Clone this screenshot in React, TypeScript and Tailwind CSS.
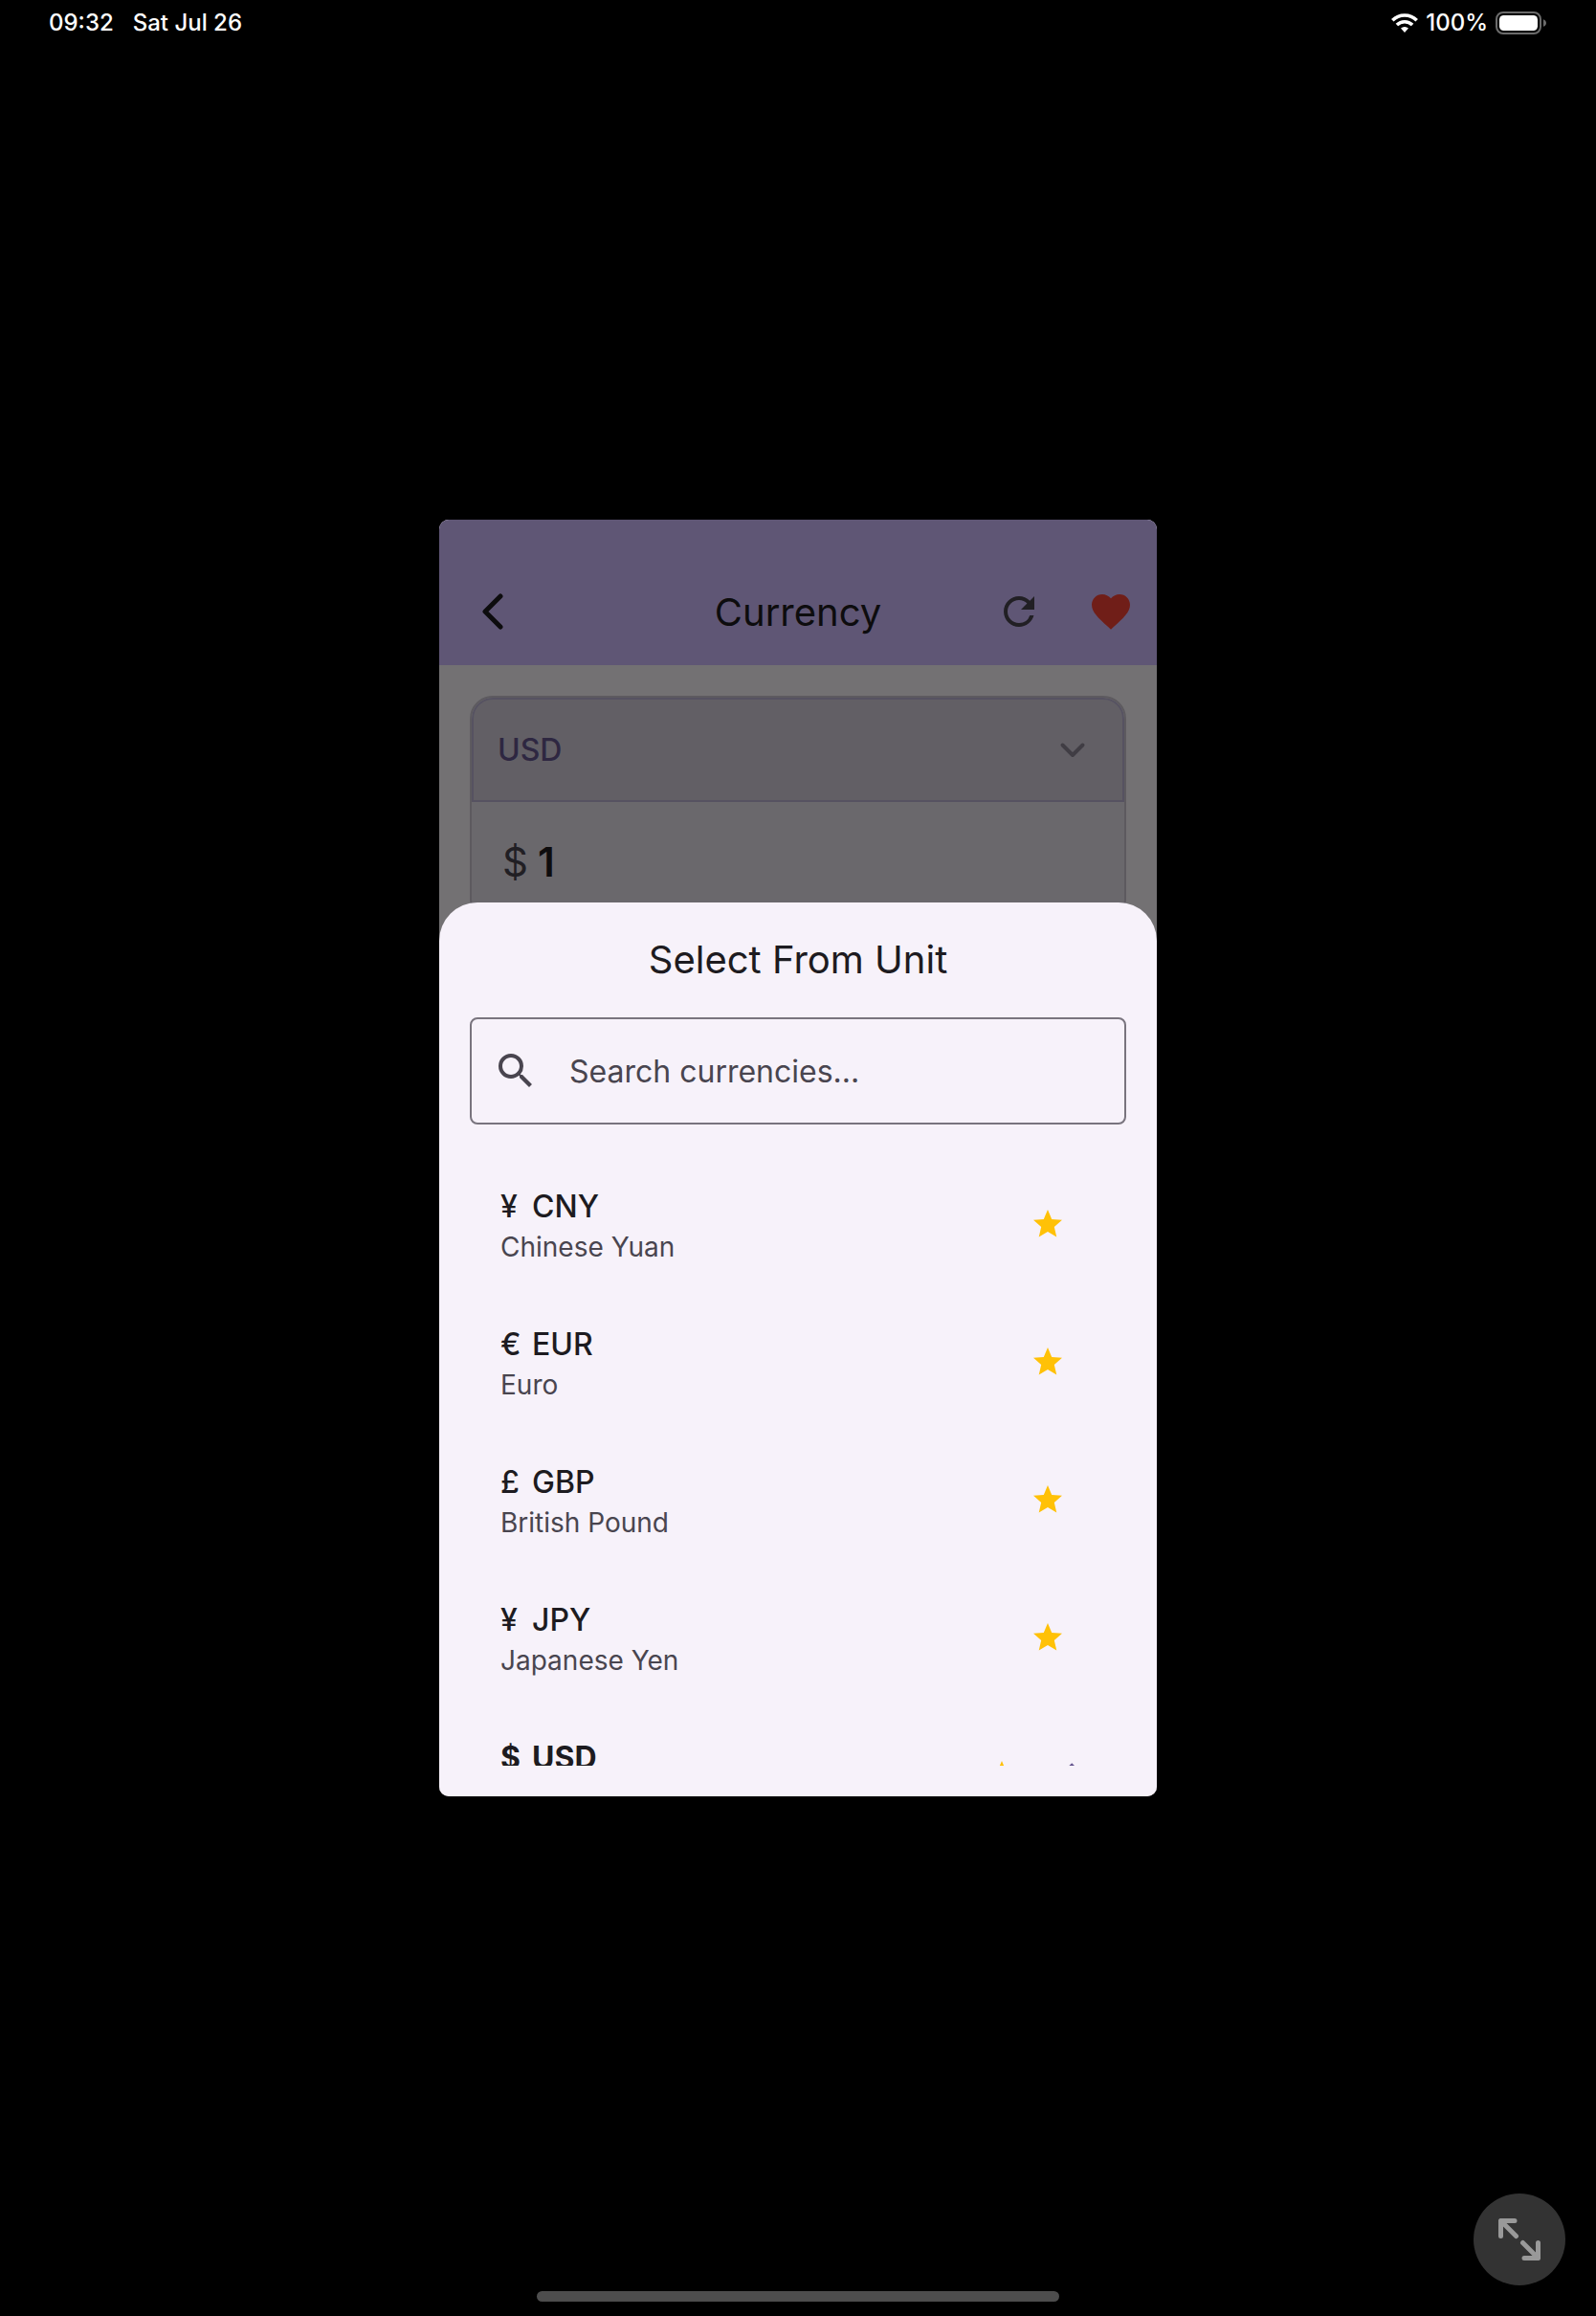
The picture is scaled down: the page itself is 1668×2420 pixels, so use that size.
import React from "react";
import { MdCheck, MdFavorite, MdRefresh, MdSearch, MdStar } from "react-icons/md";

const currencies = [
  { symbol: "¥", code: "CNY", name: "Chinese Yuan" },
  { symbol: "€", code: "EUR", name: "Euro" },
  { symbol: "£", code: "GBP", name: "British Pound" },
  { symbol: "¥", code: "JPY", name: "Japanese Yen" },
  { symbol: "$", code: "USD", name: "US Dollar", selected: true },
];

function StatusBar() {
  return (
    <header className="flex h-12 items-center justify-between px-[51px] text-2xl font-medium text-white">
      <div className="flex gap-5">
        <span>09:32</span>
        <span>Sat Jul 26</span>
      </div>
      <div className="flex items-center gap-2">
        <svg className="h-5 w-7" viewBox="0 0 28 20" fill="none" stroke="white" strokeWidth="3.6" aria-label="Wi-Fi">
          <path d="M1.3 7.2a18 18 0 0 1 25.4 0" />
          <path d="M5.9 12a11.6 11.6 0 0 1 16.2 0" />
          <path d="M14 20l-4-4.4a5.9 5.9 0 0 1 8 0z" fill="white" stroke="none" />
        </svg>
        <span>100%</span>
        <svg className="h-6 w-[54px]" viewBox="0 0 54 24" aria-label="Battery full">
          <rect x="1" y="1" width="46" height="22" rx="7" fill="none" stroke="#6b6b6b" strokeWidth="2" />
          <rect x="4" y="4" width="40" height="16" rx="4.5" fill="white" />
          <path d="M50 8.2c4 1.4 4 6.2 0 7.6z" fill="#6b6b6b" />
        </svg>
      </div>
    </header>
  );
}

function ConverterPage() {
  return (
    <div className="flex h-full flex-col bg-[#faf6fa]">
      <div className="flex h-[152px] items-end bg-[#d0bcff]">
        <div className="grid h-28 w-full grid-cols-[1fr_auto_1fr] items-center">
          <div className="flex pl-8">
            <button type="button" aria-label="Back" className="flex size-12 items-center justify-center text-[#1d1b20]">
              <svg className="h-[38px] w-[22px]" viewBox="0 0 22 38" fill="none" stroke="currentColor" strokeWidth="5" strokeLinecap="round" strokeLinejoin="round">
                <path d="M19 3L3 19l16 16" />
              </svg>
            </button>
          </div>
          <h1 className="pt-[2px] text-[40px] leading-[56px] text-[#1d1b20]">Currency</h1>
          <div className="flex justify-end gap-12 pr-6">
            <button type="button" aria-label="Refresh" className="text-[#49454f]">
              <MdRefresh className="size-12" />
            </button>
            <button type="button" aria-label="Favorite" className="text-[#f44336]">
              <MdFavorite className="size-12" />
            </button>
          </div>
        </div>
      </div>
      <div className="flex-1 p-8">
        <div className="overflow-hidden rounded-3xl border-2 border-[#cac4d0] bg-[#e7e2eb]">
          <button
            type="button"
            className="flex h-[109px] w-full items-center justify-between rounded-t-[22px] border-2 border-[#bbb4d4] bg-[#d5cfdd] pr-8 pl-[25px] text-[32px] font-medium text-[#65558f]"
          >
            <span>USD</span>
            <svg className="size-10" viewBox="0 0 40 40" fill="none" stroke="#8b8594" strokeWidth="4" strokeLinecap="round" strokeLinejoin="round">
              <path d="M9.5 14.5L20 25l10.5-10.5" />
            </svg>
          </button>
          <label className="flex h-[124px] items-center gap-[10px] px-8 text-[42px]">
            <span className="text-[#49454f]">$</span>
            <input aria-label="Amount" defaultValue="1" className="min-w-0 flex-1 bg-transparent font-semibold text-[#1d1b20] outline-none" />
          </label>
        </div>
      </div>
    </div>
  );
}

function UnitSheet() {
  return (
    <section
      role="dialog"
      aria-label="Select From Unit"
      className="absolute inset-x-0 bottom-0 flex h-[70%] flex-col rounded-t-[40px] bg-[#f7f2fa] px-8 pb-8"
    >
      <h2 className="py-8 text-center text-[40px] leading-[56px] text-[#1d1b20]">Select From Unit</h2>
      <label className="flex h-28 shrink-0 items-center gap-8 rounded-lg border-2 border-[#79747e] px-[22px] text-[#49454f]">
        <MdSearch className="size-12 shrink-0" />
        <input
          type="search"
          aria-label="Search currencies"
          placeholder="Search currencies..."
          className="min-w-0 flex-1 bg-transparent pt-[2px] text-[32px] outline-none placeholder:text-[#49454f]"
        />
      </label>
      <ul className="mt-8 min-h-0 flex-1 overflow-y-auto [scrollbar-width:none]">
        {currencies.map((c) => (
          <li key={c.code}>
            <button type="button" className="flex h-36 w-full items-center pr-12 pl-8 text-left">
              <span className="flex flex-1 flex-col pt-1 text-[#49454f]">
                <span
                  className={
                    c.selected
                      ? "flex gap-3 text-[32px] leading-[44px] font-bold text-[#1d1b20]"
                      : "flex gap-3 text-[32px] leading-[44px] font-medium text-[#1d1b20]"
                  }
                >
                  <span className="w-[21px]">{c.symbol}</span>
                  <span>{c.code}</span>
                </span>
                <span className="text-[28px] leading-[40px]">{c.name}</span>
              </span>
              <MdStar className="mr-4 size-9 text-[#ffc107]" />
              {c.selected && <MdCheck className="size-12 text-[#65558f]" />}
            </button>
          </li>
        ))}
      </ul>
    </section>
  );
}

export default function App() {
  return (
    <div className="relative flex min-h-screen flex-col bg-black font-['Inter',sans-serif]">
      <StatusBar />
      <main className="flex flex-1 items-center justify-center">
        <div className="relative aspect-[375/667] w-full max-w-[750px] overflow-hidden rounded-[10px]">
          <ConverterPage />
          <div className="absolute inset-0 bg-black/54" />
          <UnitSheet />
        </div>
      </main>
      <footer className="flex h-12 items-end justify-center pb-[15px]">
        <div className="h-[11px] w-1/3 max-w-[546px] rounded-full bg-[#4d4d4d]" />
      </footer>
      <button
        type="button"
        aria-label="Expand"
        className="absolute right-8 bottom-8 flex size-24 items-center justify-center rounded-full bg-[#333333]"
      >
        <svg className="size-11" viewBox="0 0 44 44" fill="none" stroke="#999999" strokeWidth="5" strokeLinecap="round" strokeLinejoin="round">
          <path d="M2.5 18.5v-16H17M2.5 2.5l16 16" />
          <path d="M41.5 25.5v16H27M41.5 41.5l-16-16" />
        </svg>
      </button>
    </div>
  );
}
